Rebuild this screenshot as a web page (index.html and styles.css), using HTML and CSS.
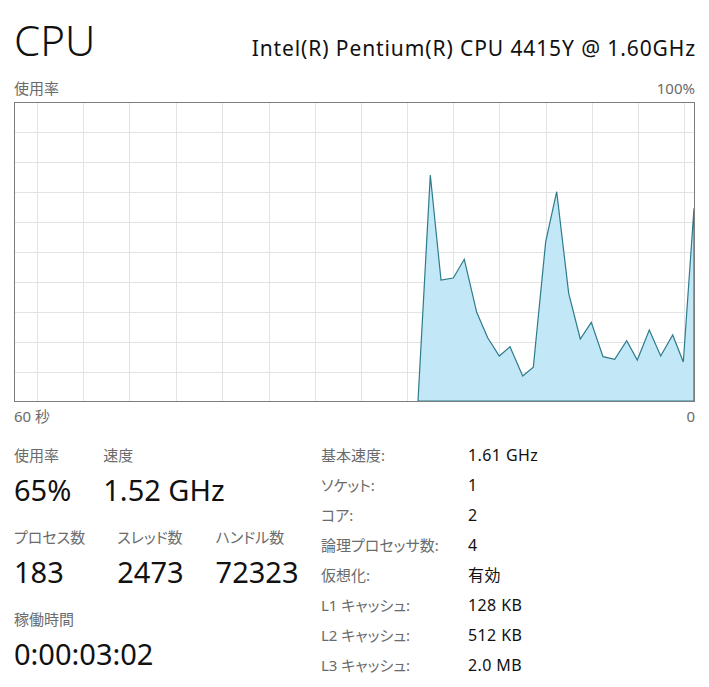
FILE: index.html
```html
<!DOCTYPE html>
<html lang="ja">

<head>
    <meta charset="UTF-8">
    <meta name="viewport" content="width=device-width, initial-scale=1.0">
    <title>CPU</title>
    <link rel="stylesheet" href="styles.css">
</head>

<body>
    <div class="page">
        <header class="head">
            <h1 class="title">CPU</h1>
            <div class="model">Intel(R) Pentium(R) CPU 4415Y @ 1.60GHz</div>
        </header>

        <div class="axis axis-top">
            <span>使用率</span>
            <span>100%</span>
        </div>

        <div class="graph">
            <svg viewBox="0 0 679 298" preserveAspectRatio="none">
                <g class="grid">
                    <line x1="22.5" y1="0" x2="22.5" y2="298" />
                    <line x1="68.5" y1="0" x2="68.5" y2="298" />
                    <line x1="114.5" y1="0" x2="114.5" y2="298" />
                    <line x1="161.5" y1="0" x2="161.5" y2="298" />
                    <line x1="207.5" y1="0" x2="207.5" y2="298" />
                    <line x1="254.5" y1="0" x2="254.5" y2="298" />
                    <line x1="300.5" y1="0" x2="300.5" y2="298" />
                    <line x1="346.5" y1="0" x2="346.5" y2="298" />
                    <line x1="392.5" y1="0" x2="392.5" y2="298" />
                    <line x1="438.5" y1="0" x2="438.5" y2="298" />
                    <line x1="484.5" y1="0" x2="484.5" y2="298" />
                    <line x1="531.5" y1="0" x2="531.5" y2="298" />
                    <line x1="577.5" y1="0" x2="577.5" y2="298" />
                    <line x1="623.5" y1="0" x2="623.5" y2="298" />
                    <line x1="669.5" y1="0" x2="669.5" y2="298" />
                    <!-- horizontal lines, every 10% -->
                    <line x1="0" y1="29.5" x2="679" y2="29.5" />
                    <line x1="0" y1="59.5" x2="679" y2="59.5" />
                    <line x1="0" y1="89.5" x2="679" y2="89.5" />
                    <line x1="0" y1="119.5" x2="679" y2="119.5" />
                    <line x1="0" y1="149.5" x2="679" y2="149.5" />
                    <line x1="0" y1="179.5" x2="679" y2="179.5" />
                    <line x1="0" y1="209.5" x2="679" y2="209.5" />
                    <line x1="0" y1="239.5" x2="679" y2="239.5" />
                    <line x1="0" y1="269.5" x2="679" y2="269.5" />
                </g>
                <polygon class="usage" points="403,298 415.3,72 426,177 438.3,175 449.3,156.3 461.7,209.3 472.7,234.7 484.3,253 495,243.7 507.7,273 518.3,264.3 530.7,138.7 541.7,88.7 553.7,190.3 565.3,236 576.3,219.3 588,253.7 599.7,256.3 611.7,237.7 622.3,257 634.3,227 645.7,253 657.7,232 668.3,259 679,105.3 679,298" />
            </svg>
        </div>

        <div class="axis axis-bottom">
            <span>60 秒</span>
            <span>0</span>
        </div>

        <section class="stats">
            <div class="live">
                <div class="stat-row">
                    <div class="stat">
                        <div class="stat-label">使用率</div>
                        <div class="stat-value">65%</div>
                    </div>
                    <div class="stat">
                        <div class="stat-label">速度</div>
                        <div class="stat-value">1.52 GHz</div>
                    </div>
                </div>
                <div class="stat-row">
                    <div class="stat">
                        <div class="stat-label">プロセス数</div>
                        <div class="stat-value">183</div>
                    </div>
                    <div class="stat">
                        <div class="stat-label">スレッド数</div>
                        <div class="stat-value">2473</div>
                    </div>
                    <div class="stat">
                        <div class="stat-label">ハンドル数</div>
                        <div class="stat-value">72323</div>
                    </div>
                </div>
                <div class="stat-row">
                    <div class="stat">
                        <div class="stat-label">稼働時間</div>
                        <div class="stat-value">0:00:03:02</div>
                    </div>
                </div>
            </div>

            <dl class="specs">
                <dt>基本速度:</dt>
                <dd>1.61 GHz</dd>
                <dt>ソケット:</dt>
                <dd>1</dd>
                <dt>コア:</dt>
                <dd>2</dd>
                <dt>論理プロセッサ数:</dt>
                <dd>4</dd>
                <dt>仮想化:</dt>
                <dd>有効</dd>
                <dt>L1 キャッシュ:</dt>
                <dd>128 KB</dd>
                <dt>L2 キャッシュ:</dt>
                <dd>512 KB</dd>
                <dt>L3 キャッシュ:</dt>
                <dd>2.0 MB</dd>
            </dl>
        </section>
    </div>
</body>

</html>
```

FILE: styles.css
```css
body {
    margin: 0;
    background: #ffffff;
    color: #111111;
    font-family: "Noto Sans", "Noto Sans CJK JP", sans-serif;
}

.page {
    padding: 15px 14px 0;
}

.head {
    display: flex;
    justify-content: space-between;
    align-items: baseline;
    height: 50px;
}

.title {
    margin: 0;
    font-size: 42px;
    font-weight: 300;
    line-height: 50px;
}

.model {
    font-size: 21px;
    line-height: 24px;
    letter-spacing: 0.9px;
    margin-right: -1px;
}

.axis {
    display: flex;
    justify-content: space-between;
    color: #6b6b6b;
    font-size: 15px;
    line-height: 18px;
}

.axis-top {
    margin-top: 14px;
}

.axis-bottom {
    margin-top: 5px;
}

.graph {
    margin-top: 5px;
    height: 300px;
    border: 1px solid #7d7d7d;
    box-sizing: border-box;
}

.graph svg {
    display: block;
    width: 100%;
    height: 100%;
}

.grid line {
    stroke: #e3e3e3;
    stroke-width: 1;
}

.usage {
    fill: #c2e8f7;
    stroke: #2d7b8b;
    stroke-width: 1.2;
    stroke-linejoin: miter;
}

.stats {
    display: grid;
    grid-template-columns: 307px 1fr;
    margin-top: 15px;
}

.live {
    padding-top: 5px;
}

.stat-row {
    display: flex;
    gap: 32px;
    margin-bottom: 19px;
}

.stat-label {
    color: #6b6b6b;
    font-size: 15px;
    line-height: 20px;
    font-feature-settings: "palt";
}

.stat-value {
    margin-top: 7px;
    font-size: 29px;
    line-height: 36px;
}

.specs {
    display: grid;
    grid-template-columns: 147px 1fr;
    grid-auto-rows: 30px;
    margin: 0;
    font-size: 15px;
    line-height: 30px;
}

.specs dt {
    color: #6b6b6b;
    font-feature-settings: "palt";
}

.specs dd {
    margin: 0;
    color: #111111;
    font-size: 16px;
    letter-spacing: 0.4px;
}
```
